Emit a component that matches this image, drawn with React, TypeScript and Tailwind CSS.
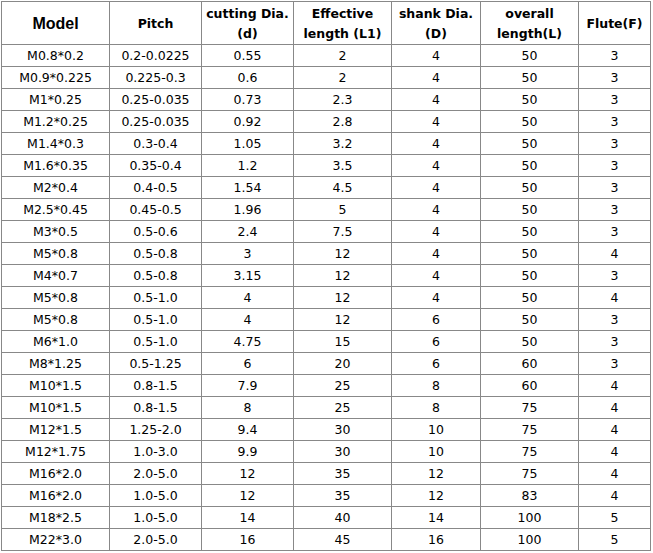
const HEADERS: string[][] = [
  ["Model"],
  ["Pitch"],
  ["cutting Dia.", "(d)"],
  ["Effective", "length (L1)"],
  ["shank Dia.", "(D)"],
  ["overall", "length(L)"],
  ["Flute(F)"],
];

const COL_WIDTHS = ["w-[108px]", "w-[92px]", "w-[92px]", "w-[98px]", "w-[89px]", "w-[98px]", "w-[72px]"];

const ROWS: string[][] = [
  ["M0.8*0.2", "0.2-0.0225", "0.55", "2", "4", "50", "3"],
  ["M0.9*0.225", "0.225-0.3", "0.6", "2", "4", "50", "3"],
  ["M1*0.25", "0.25-0.035", "0.73", "2.3", "4", "50", "3"],
  ["M1.2*0.25", "0.25-0.035", "0.92", "2.8", "4", "50", "3"],
  ["M1.4*0.3", "0.3-0.4", "1.05", "3.2", "4", "50", "3"],
  ["M1.6*0.35", "0.35-0.4", "1.2", "3.5", "4", "50", "3"],
  ["M2*0.4", "0.4-0.5", "1.54", "4.5", "4", "50", "3"],
  ["M2.5*0.45", "0.45-0.5", "1.96", "5", "4", "50", "3"],
  ["M3*0.5", "0.5-0.6", "2.4", "7.5", "4", "50", "3"],
  ["M5*0.8", "0.5-0.8", "3", "12", "4", "50", "4"],
  ["M4*0.7", "0.5-0.8", "3.15", "12", "4", "50", "3"],
  ["M5*0.8", "0.5-1.0", "4", "12", "4", "50", "4"],
  ["M5*0.8", "0.5-1.0", "4", "12", "6", "50", "3"],
  ["M6*1.0", "0.5-1.0", "4.75", "15", "6", "50", "3"],
  ["M8*1.25", "0.5-1.25", "6", "20", "6", "60", "3"],
  ["M10*1.5", "0.8-1.5", "7.9", "25", "8", "60", "4"],
  ["M10*1.5", "0.8-1.5", "8", "25", "8", "75", "4"],
  ["M12*1.5", "1.25-2.0", "9.4", "30", "10", "75", "4"],
  ["M12*1.75", "1.0-3.0", "9.9", "30", "10", "75", "4"],
  ["M16*2.0", "2.0-5.0", "12", "35", "12", "75", "4"],
  ["M16*2.0", "1.0-5.0", "12", "35", "12", "83", "4"],
  ["M18*2.5", "1.0-5.0", "14", "40", "14", "100", "5"],
  ["M22*3.0", "2.0-5.0", "16", "45", "16", "100", "5"],
];

export default function App() {
  return (
    <div className="bg-white min-h-screen p-px font-['DejaVu_Sans',Verdana,sans-serif] text-black">
      <table className="table-fixed border-collapse w-[650px]">
        <colgroup>
          {COL_WIDTHS.map((w, i) => (
            <col key={i} className={w} />
          ))}
        </colgroup>
        <thead>
          <tr className="h-[43px]">
            {HEADERS.map((lines, i) => (
              <th
                key={i}
                className={`border border-[#888] p-0 pt-[2px] font-bold leading-[20px] text-center ${
                  i === 0 ? "text-[16px] font-['Liberation_Sans',Arial,sans-serif]" : "text-[12.5px]"
                }`}
              >
                {lines.map((l, j) => (
                  <div key={j}>{l}</div>
                ))}
              </th>
            ))}
          </tr>
        </thead>
        <tbody>
          {ROWS.map((row, r) => (
            <tr key={r} className="h-[22px]">
              {row.map((cell, c) => (
                <td
                  key={c}
                  className="border border-[#888] p-0 text-center text-[12.5px] leading-[20px]"
                >
                  {cell}
                </td>
              ))}
            </tr>
          ))}
        </tbody>
      </table>
    </div>
  );
}
